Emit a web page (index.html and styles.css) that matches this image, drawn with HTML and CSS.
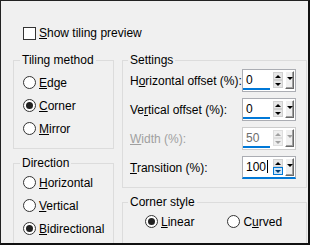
FILE: index.html
```html
<!DOCTYPE html>
<html>
<head>
<meta charset="utf-8">
<link rel="stylesheet" href="styles.css">
</head>
<body>
<div class="dlg">
  <div class="check-row">
    <span class="checkbox"></span>
    <span class="lbl"><u>S</u>how tiling preview</span>
  </div>
  <div class="columns">
    <div class="col col-left">
      <div class="group g-tiling">
        <div class="title">Tiling method</div>
        <div class="radio-list">
          <div class="radio-row"><span class="radio"></span><span class="lbl"><u>E</u>dge</span></div>
          <div class="radio-row"><span class="radio on"></span><span class="lbl"><u>C</u>orner</span></div>
          <div class="radio-row"><span class="radio"></span><span class="lbl"><u>M</u>irror</span></div>
        </div>
      </div>
      <div class="group g-direction">
        <div class="title">Direction</div>
        <div class="radio-list">
          <div class="radio-row"><span class="radio"></span><span class="lbl"><u>H</u>orizontal</span></div>
          <div class="radio-row"><span class="radio"></span><span class="lbl"><u>V</u>ertical</span></div>
          <div class="radio-row"><span class="radio on"></span><span class="lbl"><u>B</u>idirectional</span></div>
        </div>
      </div>
    </div>
    <div class="col col-right">
      <div class="group g-settings">
        <div class="title">Settings</div>
        <div class="field-list">
          <div class="field-row">
            <span class="lbl">H<u>o</u>rizontal offset (%):</span>
            <div class="spinbox">
              <div class="value"><span class="val-text">0</span><span class="bar"></span></div>
              <div class="spin"><span class="sb up"></span><span class="sb down"></span></div>
              <span class="drop"></span>
            </div>
          </div>
          <div class="field-row">
            <span class="lbl">Ve<u>r</u>tical offset (%):</span>
            <div class="spinbox">
              <div class="value"><span class="val-text">0</span><span class="bar"></span></div>
              <div class="spin"><span class="sb up"></span><span class="sb down"></span></div>
              <span class="drop"></span>
            </div>
          </div>
          <div class="field-row disabled">
            <span class="lbl"><u>W</u>idth (%):</span>
            <div class="spinbox">
              <div class="value"><span class="val-text">50</span><span class="bar"></span></div>
              <div class="spin"><span class="sb up"></span><span class="sb down"></span></div>
              <span class="drop"></span>
            </div>
          </div>
          <div class="field-row focused">
            <span class="lbl"><u>T</u>ransition (%):</span>
            <div class="spinbox">
              <div class="value"><span class="val-text">100<span class="caret"></span></span></div>
              <div class="spin"><span class="sb up"></span><span class="sb down hot"></span></div>
              <span class="drop"></span>
            </div>
          </div>
        </div>
      </div>
      <div class="group g-corner">
        <div class="title">Corner style</div>
        <div class="radio-inline">
          <div class="radio-row"><span class="radio on"></span><span class="lbl"><u>L</u>inear</span></div>
          <div class="radio-row"><span class="radio"></span><span class="lbl">C<u>u</u>rved</span></div>
        </div>
      </div>
    </div>
  </div>
</div>
</body>
</html>
```

FILE: styles.css
```css
* { box-sizing: border-box; }
html, body { margin: 0; padding: 0; background: #f0f0f0; }
body {
  font-family: "Liberation Sans", Arial, sans-serif;
  font-size: 12px;
  color: #000;
}
u { text-decoration: underline; text-underline-offset: 1px; }

.dlg {
  width: 310px;
  height: 245px;
  overflow: hidden;
  background: #f0f0f0;
  border-top: 1px solid #222;
  border-left: 1px solid #222;
  border-right: 2px solid #111;
  border-bottom: 2px solid #111;
  padding: 24px 1px 0 12px;
}

.lbl { line-height: 16px; white-space: nowrap; }

.check-row {
  display: flex;
  align-items: center;
  gap: 3px;
  height: 16px;
  margin-left: 10px;
}
.checkbox {
  width: 13px;
  height: 13px;
  border: 1px solid #333;
  background: #fff;
  flex: none;
}

.columns {
  display: flex;
  gap: 8px;
  margin-top: 19px;
}
.col { display: flex; flex-direction: column; gap: 14px; flex: none; }
.col-left { width: 101px; }
.col-right { width: 185px; }

.group {
  border: 1px solid #dcdcdc;
  padding: 0 9px 8px 9px;
}
.title {
  margin-top: -9px;
  margin-left: -3px;
  padding: 0 2px;
  width: fit-content;
  line-height: 16px;
  background: #f0f0f0;
  white-space: nowrap;
}
.g-tiling .radio-list { margin-top: 3px; }
.g-direction { padding-bottom: 30px; }
.g-settings, .g-corner { padding-left: 7px; }
.g-settings .title, .g-corner .title { margin-left: -2px; }
.g-corner { padding-bottom: 30px; }

.radio-row {
  display: flex;
  align-items: center;
  gap: 3px;
  height: 23px;
}
.radio {
  width: 13px;
  height: 13px;
  border: 1px solid #333;
  border-radius: 50%;
  background: #fff;
  display: flex;
  align-items: center;
  justify-content: center;
  flex: none;
}
.radio.on::after {
  content: "";
  width: 7px;
  height: 7px;
  border-radius: 50%;
  background: #222;
}

.radio-inline {
  display: flex;
  gap: 33px;
  margin-left: 15px;
}

.field-list {
  display: flex;
  flex-direction: column;
  gap: 6px;
  margin-top: 1px;
  margin-right: 1px;
}
.field-row {
  display: flex;
  align-items: center;
  justify-content: space-between;
  height: 23px;
}
.field-row.disabled .lbl { color: #a0a0a0; }

.spinbox {
  flex: none;
  width: 54px;
  height: 23px;
  border: 1px solid #abadb3;
  background: #fff;
  display: flex;
  align-items: center;
  padding: 0 1px 0 0;
}
.value {
  width: 27px;
  height: 21px;
  display: flex;
  flex-direction: column;
  justify-content: space-between;
  flex: none;
}
.val-text {
  padding-left: 3px;
  padding-top: 2px;
  line-height: 16px;
  display: flex;
  align-items: center;
}
.bar {
  height: 2px;
  background: #0078d7;
  margin-bottom: 1px;
}
.spin {
  margin-left: 3px;
  width: 10px;
  display: flex;
  flex-direction: column;
  align-self: flex-start;
  margin-top: 2px;
  flex: none;
}
.sb {
  width: 10px;
  height: 8px;
  background: #e6e6e6;
  border: 1px solid #d0d0d0;
  display: flex;
  align-items: center;
  justify-content: center;
}
.sb::after {
  content: "";
  width: 0;
  height: 0;
  border-left: 3px solid transparent;
  border-right: 3px solid transparent;
}
.sb.up::after { border-bottom: 3px solid #000; }
.sb.down::after { border-top: 3px solid #000; }
.drop {
  flex: none;
  margin-left: 2px;
  width: 9px;
  height: 18px;
  align-self: flex-start;
  margin-top: 1px;
  background: #f0f0f0;
  border-top: 1px solid #fff;
  border-left: 1px solid #fff;
  border-right: 1px solid #696969;
  border-bottom: 1px solid #696969;
  box-shadow: inset -1px -1px 0 #a0a0a0;
  display: flex;
  justify-content: center;
  padding-top: 5px;
}
.drop::after {
  content: "";
  width: 0;
  height: 0;
  border-left: 3px solid transparent;
  border-right: 3px solid transparent;
  border-top: 3px solid #000;
}

.disabled .spinbox { border-color: #cccccc; }
.disabled .val-text { color: #6d6d6d; }
.disabled .sb { background: #efefef; border-color: #dedede; }
.disabled .sb.up::after { border-bottom-color: #a0a0a0; }
.disabled .sb.down::after { border-top-color: #a0a0a0; }
.disabled .drop::after { border-top-color: #a0a0a0; }

.focused .spinbox { border-bottom: 2px solid #0078d7; }
.caret {
  display: inline-block;
  width: 1px;
  height: 13px;
  background: #000;
  margin-left: 1px;
}
.sb.hot { background: #cce4f7; border-color: #0078d7; }
.sb.hot::after { border-top-color: #003c74; }
```
